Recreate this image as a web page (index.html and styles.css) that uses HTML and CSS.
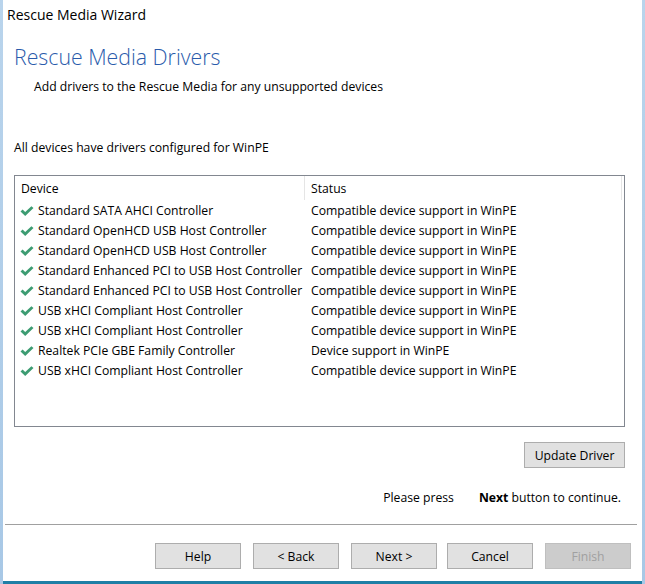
FILE: index.html
```html
<!DOCTYPE html>
<html>
<head>
<meta charset="utf-8">
<link rel="stylesheet" href="styles.css">
</head>
<body>
<div class="dialog">
  <div class="title">Rescue Media Wizard</div>
  <h1 class="heading">Rescue Media Drivers</h1>
  <div class="subtitle">Add drivers to the Rescue Media for any unsupported devices</div>
  <div class="info">All devices have drivers configured for WinPE</div>
  <div class="list">
    <div class="list-head">
      <div class="hcell hcell-device">Device</div>
      <div class="hcell hcell-status">Status</div>
    </div>
    <div class="rows">
      <div class="row"><span class="dev"><svg class="check" viewBox="0 0 14 11"><path d="M0.5 5.5 L2.6 3.6 L5.2 6.1 L11.4 0.2 L13.5 2.1 L5.2 10 Z"/></svg>Standard SATA AHCI Controller</span><span class="st">Compatible device support in WinPE</span></div>
      <div class="row"><span class="dev"><svg class="check" viewBox="0 0 14 11"><path d="M0.5 5.5 L2.6 3.6 L5.2 6.1 L11.4 0.2 L13.5 2.1 L5.2 10 Z"/></svg>Standard OpenHCD USB Host Controller</span><span class="st">Compatible device support in WinPE</span></div>
      <div class="row"><span class="dev"><svg class="check" viewBox="0 0 14 11"><path d="M0.5 5.5 L2.6 3.6 L5.2 6.1 L11.4 0.2 L13.5 2.1 L5.2 10 Z"/></svg>Standard OpenHCD USB Host Controller</span><span class="st">Compatible device support in WinPE</span></div>
      <div class="row"><span class="dev"><svg class="check" viewBox="0 0 14 11"><path d="M0.5 5.5 L2.6 3.6 L5.2 6.1 L11.4 0.2 L13.5 2.1 L5.2 10 Z"/></svg>Standard Enhanced PCI to USB Host Controller</span><span class="st">Compatible device support in WinPE</span></div>
      <div class="row"><span class="dev"><svg class="check" viewBox="0 0 14 11"><path d="M0.5 5.5 L2.6 3.6 L5.2 6.1 L11.4 0.2 L13.5 2.1 L5.2 10 Z"/></svg>Standard Enhanced PCI to USB Host Controller</span><span class="st">Compatible device support in WinPE</span></div>
      <div class="row"><span class="dev"><svg class="check" viewBox="0 0 14 11"><path d="M0.5 5.5 L2.6 3.6 L5.2 6.1 L11.4 0.2 L13.5 2.1 L5.2 10 Z"/></svg>USB xHCI Compliant Host Controller</span><span class="st">Compatible device support in WinPE</span></div>
      <div class="row"><span class="dev"><svg class="check" viewBox="0 0 14 11"><path d="M0.5 5.5 L2.6 3.6 L5.2 6.1 L11.4 0.2 L13.5 2.1 L5.2 10 Z"/></svg>USB xHCI Compliant Host Controller</span><span class="st">Compatible device support in WinPE</span></div>
      <div class="row"><span class="dev"><svg class="check" viewBox="0 0 14 11"><path d="M0.5 5.5 L2.6 3.6 L5.2 6.1 L11.4 0.2 L13.5 2.1 L5.2 10 Z"/></svg>Realtek PCIe GBE Family Controller</span><span class="st">Device support in WinPE</span></div>
      <div class="row"><span class="dev"><svg class="check" viewBox="0 0 14 11"><path d="M0.5 5.5 L2.6 3.6 L5.2 6.1 L11.4 0.2 L13.5 2.1 L5.2 10 Z"/></svg>USB xHCI Compliant Host Controller</span><span class="st">Compatible device support in WinPE</span></div>
    </div>
  </div>
  <div class="update-row"><button class="btn btn-update">Update Driver</button></div>
  <div class="hint"><span class="hint-a">Please press</span><span class="hint-b"><b>Next</b> button to continue.</span></div>
  <div class="sep"></div>
  <div class="buttons">
    <button class="btn">Help</button>
    <button class="btn">&lt; Back</button>
    <button class="btn">Next &gt;</button>
    <button class="btn btn-cancel">Cancel</button>
    <button class="btn btn-disabled">Finish</button>
  </div>
</div>
</body>
</html>
```
FILE: styles.css
```css
html, body {
  margin: 0;
  padding: 0;
}
body {
  width: 645px;
  height: 584px;
  background: linear-gradient(#b9d4ec, #a8c8e6);
  overflow: hidden;
  font-family: "Open Sans", "Noto Sans", sans-serif;
  font-size: 12.2px;
  color: #000;
}
.dialog {
  margin-left: 3px;
  width: 639px;
  height: 584px;
  background: #fff;
  box-sizing: border-box;
  display: flex;
  flex-direction: column;
  border-bottom: 3px solid #1f7fa6;
}
.title {
  font-size: 14px;
  padding: 5px 0 0 4px;
  height: 25px;
  box-sizing: border-box;
  line-height: 20px;
}
.heading {
  margin: 18px 0 0 11px;
  font-weight: 300;
  font-size: 21.3px;
  line-height: 28px;
  color: #2a5bab;
}
.subtitle {
  margin: 7px 0 0 31px;
  line-height: 18px;
}
.info {
  margin: 43px 0 0 11px;
  line-height: 18px;
}
.list {
  margin: 18px 0 0 11px;
  width: 611px;
  height: 252px;
  box-sizing: border-box;
  border: 1px solid #828790;
}
.list-head {
  display: flex;
  height: 25px;
  align-items: stretch;
}
.hcell {
  line-height: 26px;
  height: 24px;
  padding-left: 6px;
  box-sizing: border-box;
  border-right: 1px solid #e5e5e5;
}
.hcell-device {
  width: 290px;
}
.hcell-status {
  width: 317px;
}
.row {
  display: flex;
  height: 20px;
  line-height: 20px;
  white-space: nowrap;
}
.dev {
  width: 290px;
  display: flex;
  align-items: center;
  padding-left: 5px;
  box-sizing: border-box;
  overflow: hidden;
}
.st {
  padding-left: 6px;
}
.check {
  width: 14px;
  height: 11px;
  fill: #3d9c72;
  margin-right: 4px;
  flex: none;
}
.update-row {
  display: flex;
  justify-content: flex-end;
  margin: 15px 17px 0 0;
}
.btn {
  width: 86px;
  height: 26px;
  background: #e1e1e1;
  border: 1px solid #adadad;
  font-family: inherit;
  font-size: 12.2px;
  color: #000;
  padding: 0;
  margin: 0;
  border-radius: 0;
}
.btn-update {
  width: 101px;
}
.hint {
  display: flex;
  justify-content: flex-end;
  margin: 21px 21px 0 0;
  line-height: 18px;
}
.hint-a {
  margin-right: 25px;
}
.sep {
  margin: 17px 5px 0 2px;
  height: 1px;
  background: #a0a0a0;
}
.buttons {
  display: flex;
  justify-content: flex-end;
  gap: 12px;
  margin: 18px 11px 0 0;
}
.btn-cancel {
  margin-left: -2px;
}
.btn-disabled {
  background: #cccccc;
  border-color: #bfbfbf;
  color: #a0a0a0;
}
```
